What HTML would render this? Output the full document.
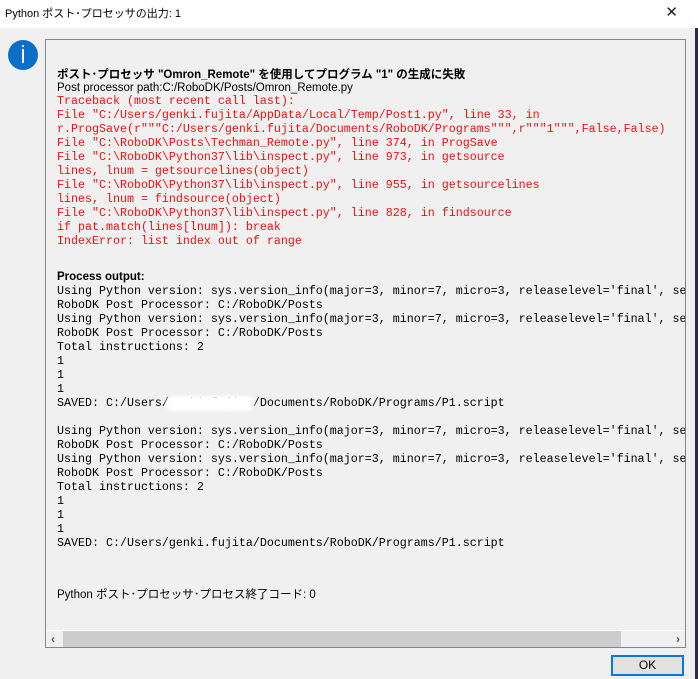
<!DOCTYPE html>
<html><head><meta charset="utf-8"><style>
*{margin:0;padding:0;box-sizing:border-box}
body{width:698px;height:679px;background:#f0f0f0;position:relative;overflow:hidden;font-family:"Liberation Sans","Noto Sans CJK JP",sans-serif}
#title{position:absolute;left:0;top:0;width:698px;height:28px;background:#fff;font-size:11px;line-height:28px;padding-left:5px;color:#000}
#close{position:absolute;right:20px;top:0;font-size:15px;line-height:26px;color:#222}
#edge{position:absolute;right:0;top:28px;width:3px;height:651px;background:#2c2c44}
#icon{position:absolute;left:8px;top:40px;width:30px;height:30px;border-radius:50%;background:#0a6fc8}
#icon:after{content:"";position:absolute;left:14px;top:9px;width:2px;height:14px;background:#fff}
#icon:before{content:"";position:absolute;left:14px;top:5px;width:2px;height:2px;background:#fff}
#box{position:absolute;left:45px;top:39px;width:641px;height:609px;border:1px solid #858585;overflow:hidden}
.l{position:absolute;left:11px;white-space:pre;height:14px;line-height:14px;font-size:11.5px;color:#000}
.m{position:absolute;left:11px;white-space:pre;font-family:"Liberation Mono",monospace;font-size:11.67px;line-height:14px;color:#000}
.r{color:#f01010}
.b{font-weight:bold}
#sb{position:absolute;left:0;bottom:0;width:639px;height:17px;background:#f0f0f0;border-top:1px solid #fff}
#thumb{position:absolute;left:17px;top:0;width:558px;height:16px;background:#cdcdcd}
.ar{position:absolute;top:0;font-size:12px;line-height:16px;color:#555;font-weight:bold}
#blur{position:absolute;left:166px;top:396px;width:88px;height:15px;background:#fff;border-radius:7px;filter:blur(1.5px)}
#ok{position:absolute;left:611px;top:655px;width:73px;height:21px;border:2px solid #0a78d7;background:#e1e1e1;font-size:12px;text-align:center;line-height:17px}
</style></head><body>
<div id="title">Python ポスト･プロセッサの出力: 1</div>
<div id="close">✕</div>
<div id="edge"></div>
<div id="icon"></div>
<div id="box">
<div class="l b" style="top:28px">ポスト･プロセッサ "Omron_Remote" を使用してプログラム "1" の生成に失敗</div>
<div class="l" style="top:41px">Post processor path:C:/RoboDK/Posts/Omron_Remote.py</div>
<div class="m r" style="top:54px">Traceback (most recent call last):
File "C:/Users/genki.fujita/AppData/Local/Temp/Post1.py", line 33, in
r.ProgSave(r"""C:/Users/genki.fujita/Documents/RoboDK/Programs""",r"""1""",False,False)
File "C:\RoboDK\Posts\Techman_Remote.py", line 374, in ProgSave
File "C:\RoboDK\Python37\lib\inspect.py", line 973, in getsource
lines, lnum = getsourcelines(object)
File "C:\RoboDK\Python37\lib\inspect.py", line 955, in getsourcelines
lines, lnum = findsource(object)
File "C:\RoboDK\Python37\lib\inspect.py", line 828, in findsource
if pat.match(lines[lnum]): break
IndexError: list index out of range</div>
<div class="l b" style="top:230px">Process output:</div>
<div class="m" style="top:244px">Using Python version: sys.version_info(major=3, minor=7, micro=3, releaselevel='final', serial=0)
RoboDK Post Processor: C:/RoboDK/Posts
Using Python version: sys.version_info(major=3, minor=7, micro=3, releaselevel='final', serial=0)
RoboDK Post Processor: C:/RoboDK/Posts
Total instructions: 2
1
1
1
SAVED: C:/Users/genki.fujita/Documents/RoboDK/Programs/P1.script

Using Python version: sys.version_info(major=3, minor=7, micro=3, releaselevel='final', serial=0)
RoboDK Post Processor: C:/RoboDK/Posts
Using Python version: sys.version_info(major=3, minor=7, micro=3, releaselevel='final', serial=0)
RoboDK Post Processor: C:/RoboDK/Posts
Total instructions: 2
1
1
1
SAVED: C:/Users/genki.fujita/Documents/RoboDK/Programs/P1.script</div>
<div class="l" style="top:548px">Python ポスト･プロセッサ･プロセス終了コード: 0</div>
<div id="sb"><div id="thumb"></div><span class="ar" style="left:5px">&lsaquo;</span><span class="ar" style="right:5px">&rsaquo;</span></div>
</div>
<div id="blur"></div>
<div id="ok">OK</div>
</body></html>
